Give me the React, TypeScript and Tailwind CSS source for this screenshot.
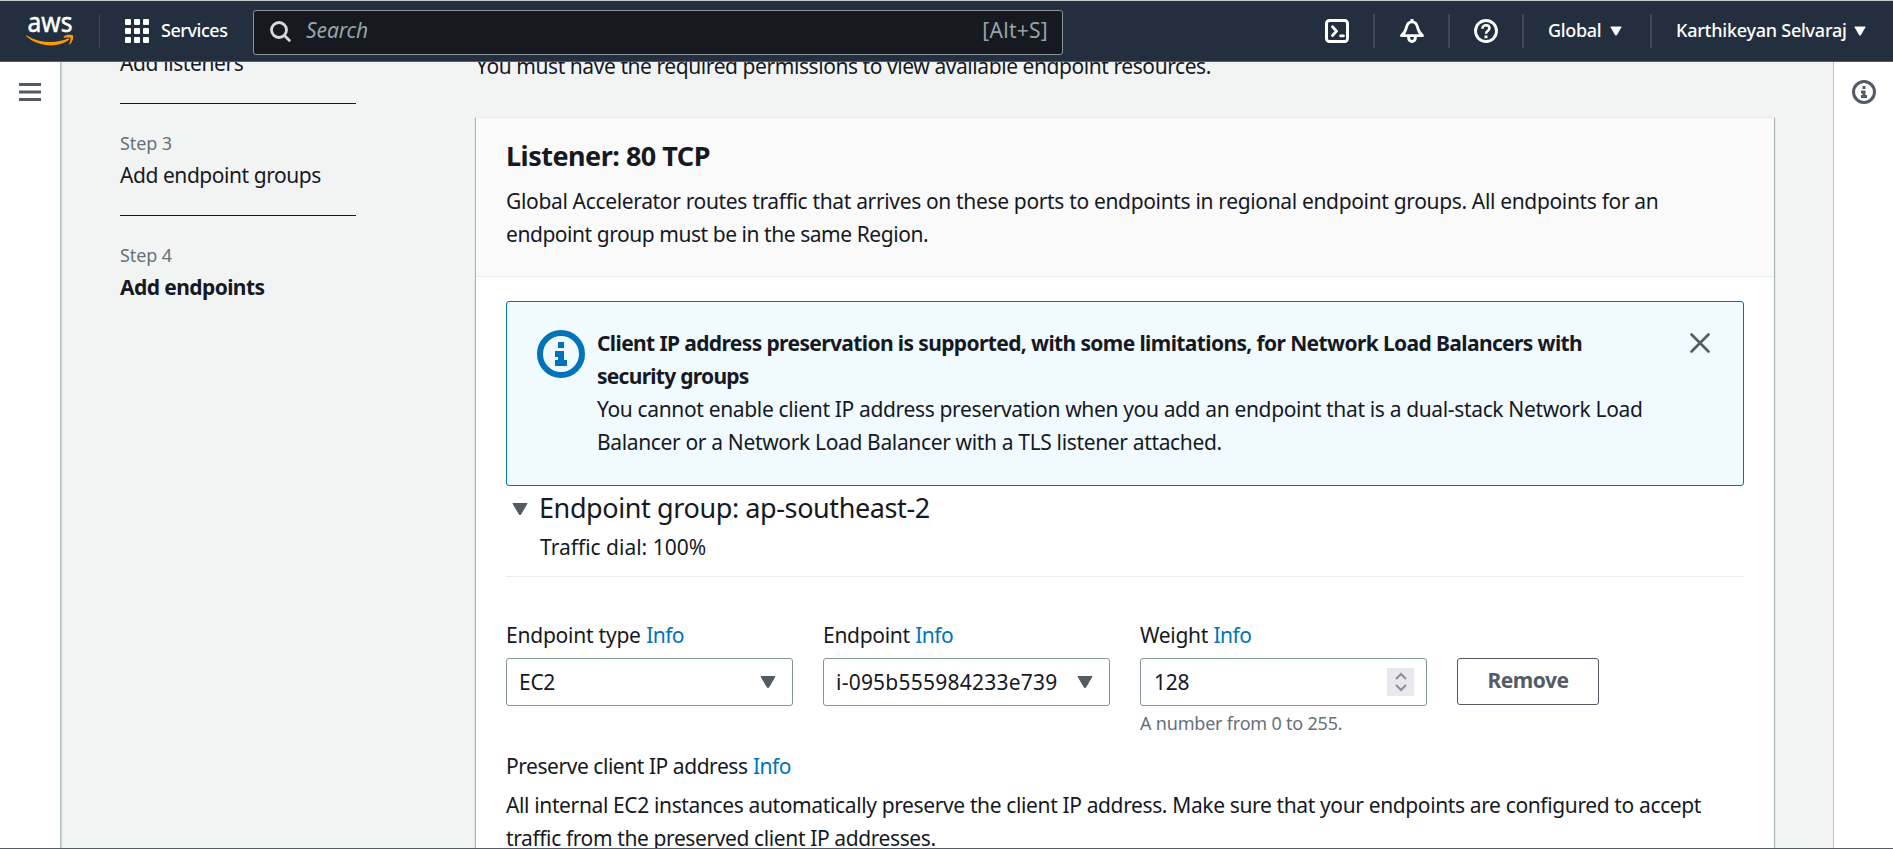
import type { ReactNode } from "react";

function Caret({ className = "" }: { className?: string }) {
  return (
    <svg viewBox="0 0 16 12" className={className} fill="currentColor">
      <path d="M1 .5h14L8.6 11.5H7.4z" stroke="currentColor" strokeLinejoin="round" />
    </svg>
  );
}

function InfoIcon({ className = "" }: { className?: string }) {
  return (
    <svg viewBox="0 0 16 16" className={className} fill="none">
      <circle cx="8" cy="8" r="7" stroke="currentColor" strokeWidth="2" />
      <path d="M7 4h2v2H7zM6 7h3v3h1v2H6v-2h1V9H6z" fill="currentColor" />
    </svg>
  );
}

function AwsLogo() {
  return (
    <svg viewBox="0 0 48 32" className="h-8 w-12 shrink-0 overflow-visible">
      <text
        x="1.5"
        y="16.8"
        textLength="45"
        lengthAdjust="spacingAndGlyphs"
        fill="#fff"
        stroke="#fff"
        strokeWidth=".5"
        fontSize="27"
        fontFamily="Noto Sans, sans-serif"
      >
        aws
      </text>
      <path
        d="M.8 20.4C8 24.800 16 27.100 24.500 27.100c6 0 12.500-1.200 17.500-3.500 1-.4 1.800.6.8 1.400C38.200 28.500 31.500 30.400 25.200 30.400 15.800 30.400 6.800 27 .3 21.200c-.5-.5 0-1.200.5-.8z"
        fill="#f90"
      />
      <path
        d="M38 21.400c2.500-1.800 7.700-1.900 8.900-.9 1 1.100-.2 6.500-2.800 8.700-.5.4-1 .1-.8-.4.8-1.900 1.700-4.900 1.200-5.700-.6-.8-3.900-.6-6.200-.4-.7 0-.8-.8-.3-1.300z"
        fill="#f90"
      />
    </svg>
  );
}

function TerminalIcon() {
  return (
    <svg viewBox="0 0 16 16" className="size-6" fill="none" stroke="#fff" strokeLinecap="round" strokeLinejoin="round">
      <rect x="1" y="1" width="14" height="14" rx="2" strokeWidth="2" />
      <path d="m5 5.200 2.700 2.900L5 11M10.400 11.200h1.900" strokeWidth="1.900" />
    </svg>
  );
}

function BellIcon() {
  return (
    <svg viewBox="0 0 16 16" className="size-6" fill="none" stroke="#fff" strokeLinejoin="round">
      <path d="M8 0v2" strokeWidth="2" />
      <path d="M8 1.900C5.700 1.900 4.600 3.700 4.200 5.800 3.700 8.400 3.200 9.200 1 11.100h14c-2.200-1.900-2.700-2.700-3.200-5.300C11.400 3.700 10.300 1.900 8 1.900z" strokeWidth="1.900" />
      <path d="M5.800 11.500v1.300a2.200 2.200 0 0 0 4.400 0v-1.300" strokeWidth="2" />
    </svg>
  );
}

function HelpIcon() {
  return (
    <svg viewBox="0 0 16 16" className="size-6" fill="none" stroke="#fff">
      <circle cx="8" cy="8" r="7" strokeWidth="1.900" />
      <path d="M5.600 6.500C5.600 5 6.600 4.200 8 4.200s2.300.8 2.300 2c0 1.700-2.300 1.700-2.300 3.700" strokeWidth="1.700" />
      <path d="M8 11v1.800" strokeWidth="2" />
    </svg>
  );
}

function GridIcon() {
  const steps = [0, 9, 18];
  return (
    <svg viewBox="0 0 24 24" className="size-6" fill="#fff">
      {steps.map((y) => steps.map((x) => <rect key={`${x}-${y}`} x={x} y={y} width="6" height="6" rx="1" />))}
    </svg>
  );
}

function Divider({ className = "" }: { className?: string }) {
  return <span className={`h-[34px] w-0.5 shrink-0 bg-[#414750] ${className}`} />;
}

function TopBar() {
  return (
    <header className="flex h-[62px] shrink-0 items-center border-t border-b border-t-[#c3cbcc] border-b-[#545b6b] bg-[#232f3e] pr-[27px] pl-[26px] text-[18px] leading-6 text-white">
      <AwsLogo />
      <span className="ml-[25px] h-[34px] w-px bg-[#414750]" />
      <div className="ml-[25px] flex w-[104px] items-center gap-3">
        <GridIcon />
        <span className="-mt-0.5 font-medium tracking-[-0.45px]">Services</span>
      </div>
      <div className="mt-0.5 ml-[24px] flex h-[45px] w-[810px] items-center rounded-[3px] border border-[#879596] bg-[#161920] pr-[14px] pl-4 text-[21px] text-[#95a5a6]">
        <svg viewBox="0 0 22 22" className="mb-px size-[22px]" fill="none" stroke="#d5dbdb" strokeWidth="2.800">
          <circle cx="9" cy="9" r="7.500" />
          <path d="m14.200 14.200 6 6" />
        </svg>
        <span className="mb-1 ml-[14px] tracking-[-0.1px] italic">Search</span>
        <span className="mb-1 ml-auto tracking-[0.27px]">[Alt+S]</span>
      </div>
      <div className="ml-auto flex items-center gap-6">
        <TerminalIcon />
        <Divider />
        <span className="ml-px">
          <BellIcon />
        </span>
        <Divider />
        <HelpIcon />
        <Divider />
        <div className="flex w-[74px] items-center justify-between">
          <span className="-mt-0.5 font-medium tracking-[-0.35px]">Global</span>
          <Caret className="h-[10px] w-3" />
        </div>
        <Divider className="ml-1" />
        <div className="flex w-[190px] items-center justify-between whitespace-nowrap">
          <span className="-mt-0.5 font-medium tracking-[-0.24px]">Karthikeyan Selvaraj</span>
          <Caret className="h-[10px] w-3" />
        </div>
      </div>
    </header>
  );
}

function Step({ label, title, active = false }: { label: string; title: string; active?: boolean }) {
  return (
    <li className={active ? "" : "mb-[27px] border-b border-[#16191f] pb-[23px]"}>
      <p className="mb-1 text-[18px] leading-6 tracking-[-0.1px] text-[#687078]">{label}</p>
      <p className={active ? "font-bold tracking-[-0.58px]" : "tracking-[-0.44px]"}>{title}</p>
    </li>
  );
}

function FieldLabel({ children, className = "tracking-[-0.3px]" }: { children: ReactNode; className?: string }) {
  return (
    <p className="whitespace-nowrap">
      <span className={className}>{children}</span>{" "}
      <span className="tracking-[-0.55px] text-[#0073bb]">Info</span>
    </p>
  );
}

function SelectBox({ value, className = "" }: { value: string; className?: string }) {
  return (
    <div className="mt-1.5 flex h-12 items-center justify-between rounded-[3px] border border-[#879596] pr-4 pl-3">
      <span className={className}>{value}</span>
      <Caret className="h-3 w-4 text-[#545b64]" />
    </div>
  );
}

export default function App() {
  return (
    <div className="flex h-[849px] w-[1893px] flex-col overflow-hidden bg-[#f2f4f4] font-['Noto_Sans',sans-serif] text-[21px] leading-[33px] text-[#16191f]">
      <TopBar />
      <div className="flex min-h-0 flex-1 overflow-hidden">
        <aside className="w-[61px] shrink-0 border-r border-[#b4c0c1] bg-white pt-[21px] pl-[19px] shadow-[1px_0_1px_rgba(0,28,36,0.15)]">
          <svg viewBox="0 0 22 18" className="h-[18px] w-[22px]" stroke="#545b64" strokeWidth="3">
            <path d="M0 1.500h22M0 9h22M0 16.500h22" />
          </svg>
        </aside>

        <ul className="-mt-[15px] ml-[59px] w-[236px] shrink-0 whitespace-nowrap">
          <li className="mb-[27px] border-b border-[#16191f] pb-[23px] tracking-[-0.39px]">Add listeners</li>
          <Step label="Step 3" title="Add endpoint groups" />
          <Step label="Step 4" title="Add endpoints" active />
        </ul>

        <main className="-mt-3 ml-[120px] w-[1298px] shrink-0 whitespace-nowrap">
          <p className="tracking-[-0.43px]">
            You must have the required permissions to view available endpoint resources.
          </p>

          <section className="mt-[34px] h-[800px] border-t border-[#eaeded] bg-white shadow-[0_1px_1px_rgba(0,28,36,0.3),1px_1px_1px_rgba(0,28,36,0.25),-1px_1px_1px_rgba(0,28,36,0.25)]">
            <div className="border-b border-[#eaeded] bg-[#fafafa] px-[30px] pt-[21px] pb-[25px]">
              <h2 className="mb-[13px] text-[27px] font-bold tracking-[-0.5px]">Listener: 80 TCP</h2>
              <p className="tracking-[-0.34px]">
                Global Accelerator routes traffic that arrives on these ports to endpoints in regional endpoint groups. All endpoints for an
              </p>
              <p className="tracking-[-0.45px]">endpoint group must be in the same Region.</p>
            </div>

            <div className="px-[30px] pt-6">
              <div className="flex h-[185px] items-start rounded-[3px] border border-[#0073bb] bg-[#f1faff] pt-[25px] pr-[33px] pl-[30px]">
                <InfoIcon className="mt-[3px] mr-3 size-12 text-[#0073bb]" />
                <div>
                  <p className="font-bold tracking-[-0.62px]">
                    Client IP address preservation is supported, with some limitations, for Network Load Balancers with
                  </p>
                  <p className="font-bold tracking-[-0.73px]">security groups</p>
                  <p className="tracking-[-0.35px]">
                    You cannot enable client IP address preservation when you add an endpoint that is a dual-stack Network Load
                  </p>
                  <p className="tracking-[-0.35px]">
                    Balancer or a Network Load Balancer with a TLS listener attached.
                  </p>
                </div>
                <svg viewBox="0 0 20 20" className="mt-1.5 ml-auto size-5" stroke="#545b64" strokeWidth="2.600" strokeLinecap="round">
                  <path d="m1.500 1.500 17 17m0-17-17 17" />
                </svg>
              </div>

              <div className="mt-1 border-b border-[#eaeded] pb-3 pl-[6px]">
                <div className="flex items-center gap-[11px]">
                  <Caret className="mt-0.5 h-3 w-4 text-[#545b64]" />
                  <h3 className="text-[27px] leading-9 tracking-[-0.4px]">Endpoint group: ap-southeast-2</h3>
                </div>
                <p className="mt-[5px] pl-7">Traffic dial: 100%</p>
              </div>

              <div className="mt-[42px] flex gap-[30px]">
                <div className="w-[287px]">
                  <FieldLabel className="tracking-[-0.23px]">Endpoint type</FieldLabel>
                  <SelectBox value="EC2" className="tracking-[-0.3px]" />
                </div>
                <div className="w-[287px]">
                  <FieldLabel>Endpoint</FieldLabel>
                  <SelectBox value="i-095b555984233e739" className="tracking-[0.23px]" />
                </div>
                <div className="w-[287px]">
                  <FieldLabel>Weight</FieldLabel>
                  <div className="mt-1.5 flex h-12 items-center justify-between rounded-[3px] border border-[#879596] pr-3 pl-[13px]">
                    <span className="tracking-[-0.2px]">128</span>
                    <span className="flex h-7 w-[27px] items-center justify-center bg-[#e9e8ee]">
                      <svg viewBox="0 0 12 20" className="h-5 w-3" fill="none" stroke="#8f8f9d" strokeWidth="2.200">
                        <path d="m1 7 5-5 5 5M1 13l5 5 5-5" />
                      </svg>
                    </span>
                  </div>
                  <p className="mt-[5px] text-[18px] leading-6 tracking-[-0.2px] text-[#687078]">
                    A number from 0 to 255.
                  </p>
                </div>
                <button className="mt-[39px] flex h-[47px] w-[142px] items-center justify-center rounded-[3px] border border-[#545b64] pb-0.5 font-bold tracking-[-0.5px] text-[#545b64]">
                  Remove
                </button>
              </div>

              <div className="mt-[15px]">
                <FieldLabel className="tracking-[-0.45px]">Preserve client IP address</FieldLabel>
              </div>
              <p className="mt-1.5 tracking-[-0.37px]">
                All internal EC2 instances automatically preserve the client IP address. Make sure that your endpoints are configured to accept
              </p>
              <p className="tracking-[-0.39px]">traffic from the preserved client IP addresses.</p>
            </div>
          </section>
        </main>

        <aside className="ml-auto w-[60px] shrink-0 border-l border-[#bdc6c7] bg-white pt-[18px] pl-[18px]">
          <InfoIcon className="size-6 text-[#545b64]" />
        </aside>
      </div>
      <div className="h-px shrink-0 bg-[#545b6b]" />
    </div>
  );
}
